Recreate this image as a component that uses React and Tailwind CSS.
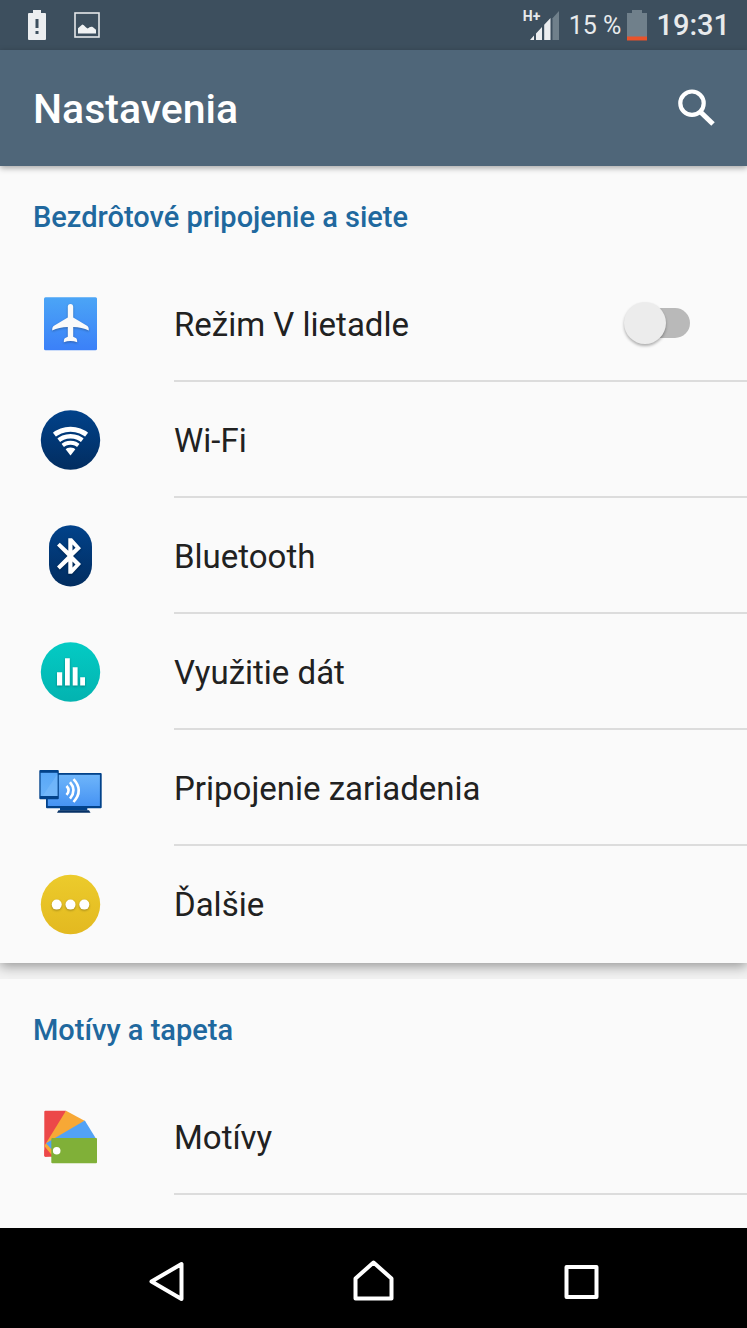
import React from "react";

function Glyph({ children }) {
  return (
    <svg viewBox="0 0 64 64" className="h-16 w-16 shrink-0" aria-hidden="true">
      {children}
    </svg>
  );
}

function Gradient({ id, from, to }) {
  return (
    <linearGradient id={id} x1="0" y1="0" x2="0" y2="1">
      <stop offset="0" stopColor={from} />
      <stop offset="1" stopColor={to} />
    </linearGradient>
  );
}

const shade = "[filter:drop-shadow(0_1px_1px_rgb(0_0_0/0.3))]";

function AirplaneIcon() {
  return (
    <Glyph>
      <defs><Gradient id="air" from="#4ba5f6" to="#3b80f8" /></defs>
      <rect x="6" y="5.2" width="53" height="53" rx="1.5" fill="url(#air)" />
      <path
        className={shade}
        fill="#fafafa"
        d="M32.5 12c-1.8 0-2.7 1.2-2.7 2.8v10.6L16 33.8c-1.4 1-1.9 2-1.8 4.7 4.6-2 10-3.2 15.6-3.4v9.6l-2.5 1.2c-1.2.7-1.5 1.7-1.5 4.3 2.2-.9 4.4-1.3 6.700-1.300s4.500.4 6.700 1.300c0-2.600-.3-3.600-1.500-4.300l-2.500-1.200v-9.600c5.600.2 11 1.400 15.600 3.400.1-2.700-.4-3.700-1.800-4.700l-13.800-8.400V14.800c0-1.600-.9-2.800-2.700-2.800z"
      />
    </Glyph>
  );
}

function WifiIcon() {
  return (
    <Glyph>
      <defs>
        <Gradient id="wifi" from="#01428a" to="#022d60" />
        <clipPath id="fan"><path d="M32.500 47.500L14 23.400V10h37v13.400z" /></clipPath>
      </defs>
      <circle cx="32.500" cy="32" r="29.700" fill="url(#wifi)" />
      <g clipPath="url(#fan)" fill="none" stroke="#fff">
        <circle cx="32.500" cy="47.500" r="26.200" strokeWidth="5" />
        <circle cx="32.500" cy="47.500" r="19.200" strokeWidth="4.400" />
        <circle cx="32.500" cy="47.500" r="12.700" strokeWidth="4" />
        <circle cx="32.500" cy="47.500" r="8" fill="#fff" stroke="none" />
      </g>
    </Glyph>
  );
}

function BluetoothIcon() {
  return (
    <Glyph>
      <defs><Gradient id="bt" from="#01428a" to="#022d60" /></defs>
      <rect x="11" y="1.200" width="43" height="61.300" rx="21.500" fill="url(#bt)" />
      <path
        className={shade}
        fill="#fff"
        fillRule="evenodd"
        d="M19 21.500L21.800 18.700 30.300 26.800V14.300H34L43 24.200 35 32 43 39.900 34 49.800H30.300V37.400L21.800 45.500 19 42.600 29.500 32zM34.500 20.500V26.600L37.500 23.700zM34.500 37.600V43.600L37.500 40.500z"
      />
    </Glyph>
  );
}

function DataIcon() {
  return (
    <Glyph>
      <defs><Gradient id="data" from="#04cbc4" to="#03b3b0" /></defs>
      <circle cx="32.500" cy="32" r="29.700" fill="url(#data)" />
      <path
        className={shade}
        fill="#fff"
        d="M19 32.300h5.200v13.200H19zM27 18.200h4.800v27.300H27zM34.700 27.300h4.900v18.200h-4.900zM42.200 37.200H47v8.300h-4.800z"
      />
    </Glyph>
  );
}

function DeviceIcon() {
  return (
    <Glyph>
      <defs>
        <Gradient id="screen" from="#6eb5fa" to="#4693f3" />
        <Gradient id="tablet" from="#5aa8f7" to="#68b1f9" />
      </defs>
      <path fill="#02428a" d="M22 52h27.300v2.500H22z" />
      <path fill="#063166" d="M20.500 54.300h30.500l1.500 2.500H19z" />
      <rect x="8" y="17" width="55.700" height="35.200" rx="1" fill="#02428a" />
      <rect x="9.800" y="18.800" width="52.100" height="31.200" fill="url(#screen)" />
      <rect x="1.300" y="14" width="19.500" height="29.300" rx="1" fill="#02428a" />
      <rect x="2.600" y="16.800" width="16.900" height="23.200" fill="url(#tablet)" />
      <path fill="#7dbdfb" d="M19.500 18v22H4.500z" opacity=".5" />
      <g fill="none" stroke="#fff" strokeWidth="2.600">
        <path d="M28.500 30q4.200 4.400 0 8.800" />
        <path d="M32 26.200q7 8.200 0 16.400" />
        <path d="M35.500 23.200q10.500 11.200 0 22.800" />
      </g>
    </Glyph>
  );
}

function MoreIcon() {
  return (
    <Glyph>
      <defs><Gradient id="more" from="#eccb2c" to="#e3b920" /></defs>
      <circle cx="32.500" cy="32.500" r="29.700" fill="url(#more)" />
      <g fill="#fff" className={shade}>
        <circle cx="18.700" cy="32.600" r="5" />
        <circle cx="32.500" cy="32.600" r="5" />
        <circle cx="46.300" cy="32.600" r="5" />
      </g>
    </Glyph>
  );
}

function ThemesIcon() {
  return (
    <Glyph>
      <path fill="#ec4849" d="M7.300 5.700H28l-12 46H7.300a1 1 0 0 1-1-1v-44a1 1 0 0 1 1-1z" />
      <path fill="#f7a836" d="M28 5.700l18.500 10-33 34L6.300 41z" />
      <path fill="#ec4849" d="M6.300 44.500l6 6.500-5 .7-1-1z" />
      <path fill="#52a2f5" d="M46.800 15.500L58.500 34.500 15 46 8 38.300z" />
      <rect x="13.300" y="33" width="45.700" height="25.200" rx="1" fill="#80b038" />
      <circle cx="18.700" cy="45.700" r="3.800" fill="#fff" />
    </Glyph>
  );
}

function Switch({ id }) {
  return (
    <input
      id={id}
      type="checkbox"
      role="switch"
      className="relative mr-[57px] h-[42px] w-[66px] shrink-0 appearance-none before:absolute before:inset-y-[6px] before:right-0 before:left-2 before:rounded-full before:bg-[#b9b9b9] after:absolute after:top-0 after:left-0 after:h-[42px] after:w-[42px] after:rounded-full after:bg-[#ececec] after:shadow-[0_2px_3px_rgb(0_0_0/0.3)] checked:after:left-6"
    />
  );
}

function Row({ icon, label, last, toggle }) {
  const cls = "flex h-[116px] items-center gap-[72px] pl-[38px] text-[33px] text-[#212121]";
  const body = "flex h-full flex-1 items-center justify-between border-b-2";
  const content = (
    <>
      {icon}
      <span className={last ? body + " border-transparent" : body + " border-[#dcdcdc]"}>
        <span className="pt-1">{label}</span>
        {toggle && <Switch id={toggle} />}
      </span>
    </>
  );
  return (
    <li>
      {toggle ? (
        <label htmlFor={toggle} className={cls}>{content}</label>
      ) : (
        <a href="#" className={cls}>{content}</a>
      )}
    </li>
  );
}

function Section({ title, children, className }) {
  return (
    <section className={className}>
      <h2 className="flex h-[100px] items-center px-[33px] pt-1 text-[29px] font-medium text-[#20689e]">{title}</h2>
      <ul>{children}</ul>
    </section>
  );
}

function StatusBar() {
  return (
    <div className="flex h-[50px] items-center justify-between bg-[#3d4f5e] pr-[17px] pl-7 text-[#e8eaec]">
      <div className="flex items-center gap-7">
        <svg viewBox="0 0 18 30" className="h-[30px] w-[18px]" role="img" aria-label="Slabá batéria">
          <path
            fill="#eceef0"
            fillRule="evenodd"
            d="M5 0h8v3h4a1 1 0 0 1 1 1v25a1 1 0 0 1-1 1H1a1 1 0 0 1-1-1V4a1 1 0 0 1 1-1h4zM7.500 9v9h3V9zM7.500 21v3h3v-3z"
          />
        </svg>
        <svg viewBox="0 0 26 26" className="h-[26px] w-[26px]" role="img" aria-label="Snímka obrazovky">
          <rect x="1" y="1" width="24" height="24" fill="none" stroke="#e4e7e9" strokeWidth="1.600" />
          <path fill="#f0f2f3" d="M4 21.500v-5.200l4.300-3.800c2.500.8 3.200 3 5.200 4 2-.8 3.200-2.500 5.500-1.200l3 2.500v3.700z" />
        </svg>
      </div>
      <div className="flex items-center">
        <div className="relative mr-[10px] h-[32px] w-[36px]">
          <svg viewBox="0 0 36 32" className="h-full w-full" aria-hidden="true">
            <path fill="#70808b" d="M29.500 9.300L36 2v29h-6.500z" />
            <path fill="#eceef0" d="M7 31l4-4.500V31zM13 24.500l6-6.500v13h-6zM21.200 15.700l6.300-6.700v22h-6.300z" />
          </svg>
          <span className="absolute top-0 left-0 text-[14px] leading-none font-bold">H+</span>
        </div>
        <span className="mr-[6px] pt-px text-[25px]">15 %</span>
        <svg viewBox="0 0 20 31" className="mr-[9px] h-[31px] w-5" aria-hidden="true">
          <path fill="#70808b" d="M5 0h10v3h5v24H0V3h5z" />
          <path fill="#e9532a" d="M0 26.500h20v4H0z" />
        </svg>
        <time className="pt-px text-[29px] font-medium">19:31</time>
      </div>
    </div>
  );
}

function NavButton({ label, d }) {
  return (
    <button type="button" aria-label={label} className="p-2">
      <svg viewBox="0 0 44 44" className="h-11 w-11" fill="none" stroke="#fff" strokeWidth="4" strokeLinejoin="round">
        <path d={d} />
      </svg>
    </button>
  );
}

export default function App() {
  return (
    <div className="flex min-h-screen flex-col bg-[#fafafa] font-[Roboto,sans-serif]">
      <StatusBar />
      <header className="relative flex h-[116px] items-center justify-between bg-[#4f6679] pr-8 pl-[33px] text-white shadow-[0_2px_6px_rgb(0_0_0/0.35)]">
        <h1 className="pt-1 text-[41px] font-medium">Nastavenia</h1>
        <button type="button" aria-label="Hľadať">
          <svg viewBox="0 0 38 38" className="h-[38px] w-[38px]" fill="none" stroke="#fff">
            <circle cx="15" cy="14.200" r="11.700" strokeWidth="4.200" />
            <path d="M23.500 23L36 35" strokeWidth="5" />
          </svg>
        </button>
      </header>
      <main className="flex-1 bg-[#f2f2f2]">
        <Section
          title="Bezdrôtové pripojenie a siete"
          className="mb-4 bg-[#fafafa] pb-px shadow-[0_3px_12px_rgb(0_0_0/0.4)]"
        >
          <Row icon={<AirplaneIcon />} label="Režim V lietadle" toggle="airplane" />
          <Row icon={<WifiIcon />} label="Wi-Fi" />
          <Row icon={<BluetoothIcon />} label="Bluetooth" />
          <Row icon={<DataIcon />} label="Využitie dát" />
          <Row icon={<DeviceIcon />} label="Pripojenie zariadenia" />
          <Row icon={<MoreIcon />} label="Ďalšie" last />
        </Section>
        <Section title="Motívy a tapeta" className="relative bg-[#fafafa] pb-[33px]">
          <Row icon={<ThemesIcon />} label="Motívy" />
        </Section>
      </main>
      <nav className="flex h-[100px] items-center justify-center gap-[148px] bg-black pt-[7px]">
        <NavButton label="Späť" d="M37.500 4V39L7.500 21.500z" />
        <NavButton label="Domov" d="M21.500 2.500L3.500 18.500V38.500H39.500V18.500z" />
        <NavButton label="Prehľad" d="M6.500 7h30v30h-30z" />
      </nav>
    </div>
  );
}
